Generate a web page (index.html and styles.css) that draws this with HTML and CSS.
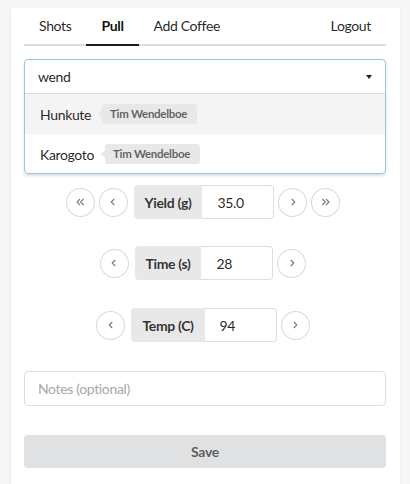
FILE: index.html
```html
<!DOCTYPE html>
<html>
<head>
<meta charset="utf-8">
<link rel="stylesheet" href="styles.css">
</head>
<body>
<div class="card">
  <nav class="menu">
    <a class="item">Shots</a>
    <a class="item active">Pull</a>
    <a class="item">Add Coffee</a>
    <a class="item push">Logout</a>
  </nav>

  <div class="dropdown">
    <div class="search-row">
      <span class="query">wend</span>
      <span class="caret"></span>
    </div>
    <div class="option selected"><span class="name">Hunkute</span><span class="tag">Tim Wendelboe</span></div>
    <div class="option"><span class="name">Karogoto</span><span class="tag">Tim Wendelboe</span></div>
  </div>

  <div class="steppers">
    <div class="stepper">
      <span class="circle"><svg viewBox="0 0 10 10"><path d="M5 2.5 L2.5 5 L5 7.5 M8 2.5 L5.5 5 L8 7.5"/></svg></span>
      <span class="circle"><svg viewBox="0 0 10 10"><path d="M6 2.5 L3.5 5 L6 7.5"/></svg></span>
      <div class="labeled"><span class="label">Yield (g)</span><span class="value">35.0</span></div>
      <span class="circle"><svg viewBox="0 0 10 10"><path d="M4 2.5 L6.5 5 L4 7.5"/></svg></span>
      <span class="circle"><svg viewBox="0 0 10 10"><path d="M2 2.5 L4.5 5 L2 7.5 M5 2.5 L7.5 5 L5 7.5"/></svg></span>
    </div>
    <div class="stepper">
      <span class="circle"><svg viewBox="0 0 10 10"><path d="M6 2.5 L3.5 5 L6 7.5"/></svg></span>
      <div class="labeled"><span class="label">Time (s)</span><span class="value">28</span></div>
      <span class="circle"><svg viewBox="0 0 10 10"><path d="M4 2.5 L6.5 5 L4 7.5"/></svg></span>
    </div>
    <div class="stepper">
      <span class="circle"><svg viewBox="0 0 10 10"><path d="M6 2.5 L3.5 5 L6 7.5"/></svg></span>
      <div class="labeled"><span class="label">Temp (C)</span><span class="value">94</span></div>
      <span class="circle"><svg viewBox="0 0 10 10"><path d="M4 2.5 L6.5 5 L4 7.5"/></svg></span>
    </div>
  </div>

  <div class="notes">Notes (optional)</div>

  <div class="save">Save</div>
</div>
</body>
</html>
```

FILE: styles.css
```css
* { box-sizing: border-box; }

html, body {
  margin: 0;
  height: 100%;
  background: #f7f7f7;
  font-family: Lato, "Open Sans", "Liberation Sans", sans-serif;
  font-size: 14px;
  letter-spacing: -0.35px;
  color: rgba(0, 0, 0, 0.87);
  overflow: hidden;
}

.card {
  margin: 8px 10px 0 11px;
  min-height: 600px;
  background: #fff;
  box-shadow: 0 1px 3px rgba(0, 0, 0, 0.08);
  padding: 0 14px 0 13px;
}

/* menu */
.menu {
  display: flex;
  border-bottom: 2px solid #dededf;
}
.item {
  display: block;
  padding: 8px 15px;
  line-height: 20px;
  border-bottom: 2px solid transparent;
  margin-bottom: -2px;
  color: rgba(0, 0, 0, 0.87);
}
.item.active {
  font-weight: 700;
  color: rgba(0, 0, 0, 0.95);
  border-bottom-color: #1b1c1d;
}
.item.push { margin-left: auto; }

/* dropdown */
.dropdown {
  margin-top: 13px;
  border: 1px solid #96c8da;
  border-radius: 4px;
  box-shadow: 0 2px 3px 0 rgba(34, 36, 38, 0.15);
  overflow: hidden;
}
.search-row {
  display: flex;
  align-items: center;
  justify-content: space-between;
  height: 34px;
  padding: 0 13px 1px 13px;
  border-bottom: 1px solid #c9e0ea;
}
.caret {
  width: 0;
  height: 0;
  border-left: 3.5px solid transparent;
  border-right: 3.5px solid transparent;
  border-top: 4px solid #222;
  margin-top: 1px;
}
.option {
  display: flex;
  align-items: center;
  height: 40px;
  padding: 0 15px;
}
.option + .option {
  height: 39px;
  border-top: 1px solid #fafafa;
}
.option.selected { background: #f4f4f4; }
.tag {
  position: relative;
  margin-left: 11px;
  height: 20px;
  line-height: 20px;
  padding: 0 10px 0 8px;
  background: #e8e8e8;
  border-radius: 3px;
  font-size: 11.5px;
  letter-spacing: -0.3px;
  font-weight: 700;
  color: rgba(0, 0, 0, 0.6);
}
.tag::before {
  content: "";
  position: absolute;
  left: 0;
  top: 50%;
  width: 6px;
  height: 6px;
  background: #e8e8e8;
  transform: translate(-50%, -50%) rotate(45deg);
}

/* steppers */
.steppers {
  margin-top: 11px;
  display: flex;
  flex-direction: column;
}
.stepper {
  display: flex;
  justify-content: center;
  align-items: center;
  gap: 4px;
  padding-right: 4px;
}
.stepper + .stepper { margin-top: 27px; }
.stepper:last-child { margin-top: 28px; }
.circle {
  width: 29px;
  height: 29px;
  border-radius: 50%;
  box-shadow: inset 0 0 0 1px #dadada;
  background: #fff;
  display: flex;
  align-items: center;
  justify-content: center;
}
.circle svg {
  width: 12px;
  height: 12px;
  fill: none;
  stroke: #777;
  stroke-width: 0.9;
}
.labeled {
  display: flex;
  height: 34px;
  margin-left: 2px;
}
.label {
  display: flex;
  align-items: center;
  padding: 0 11px;
  background: #e8e8e8;
  border-radius: 4px 0 0 4px;
  font-weight: 700;
  color: rgba(0, 0, 0, 0.8);
}
.value {
  display: flex;
  align-items: center;
  width: 72px;
  padding-left: 15px;
  border: 1px solid #dedede;
  border-left: none;
  border-radius: 0 4px 4px 0;
}

/* notes & save */
.notes {
  margin-top: 29px;
  height: 35px;
  line-height: 33px;
  border: 1px solid #dedede;
  border-radius: 4px;
  padding: 0 13px;
  color: #a8a8a8;
}
.save {
  margin-top: 29px;
  height: 33px;
  line-height: 33px;
  text-align: center;
  background: #e0e1e2;
  border-radius: 4px;
  font-weight: 700;
  color: rgba(0, 0, 0, 0.6);
}
```
